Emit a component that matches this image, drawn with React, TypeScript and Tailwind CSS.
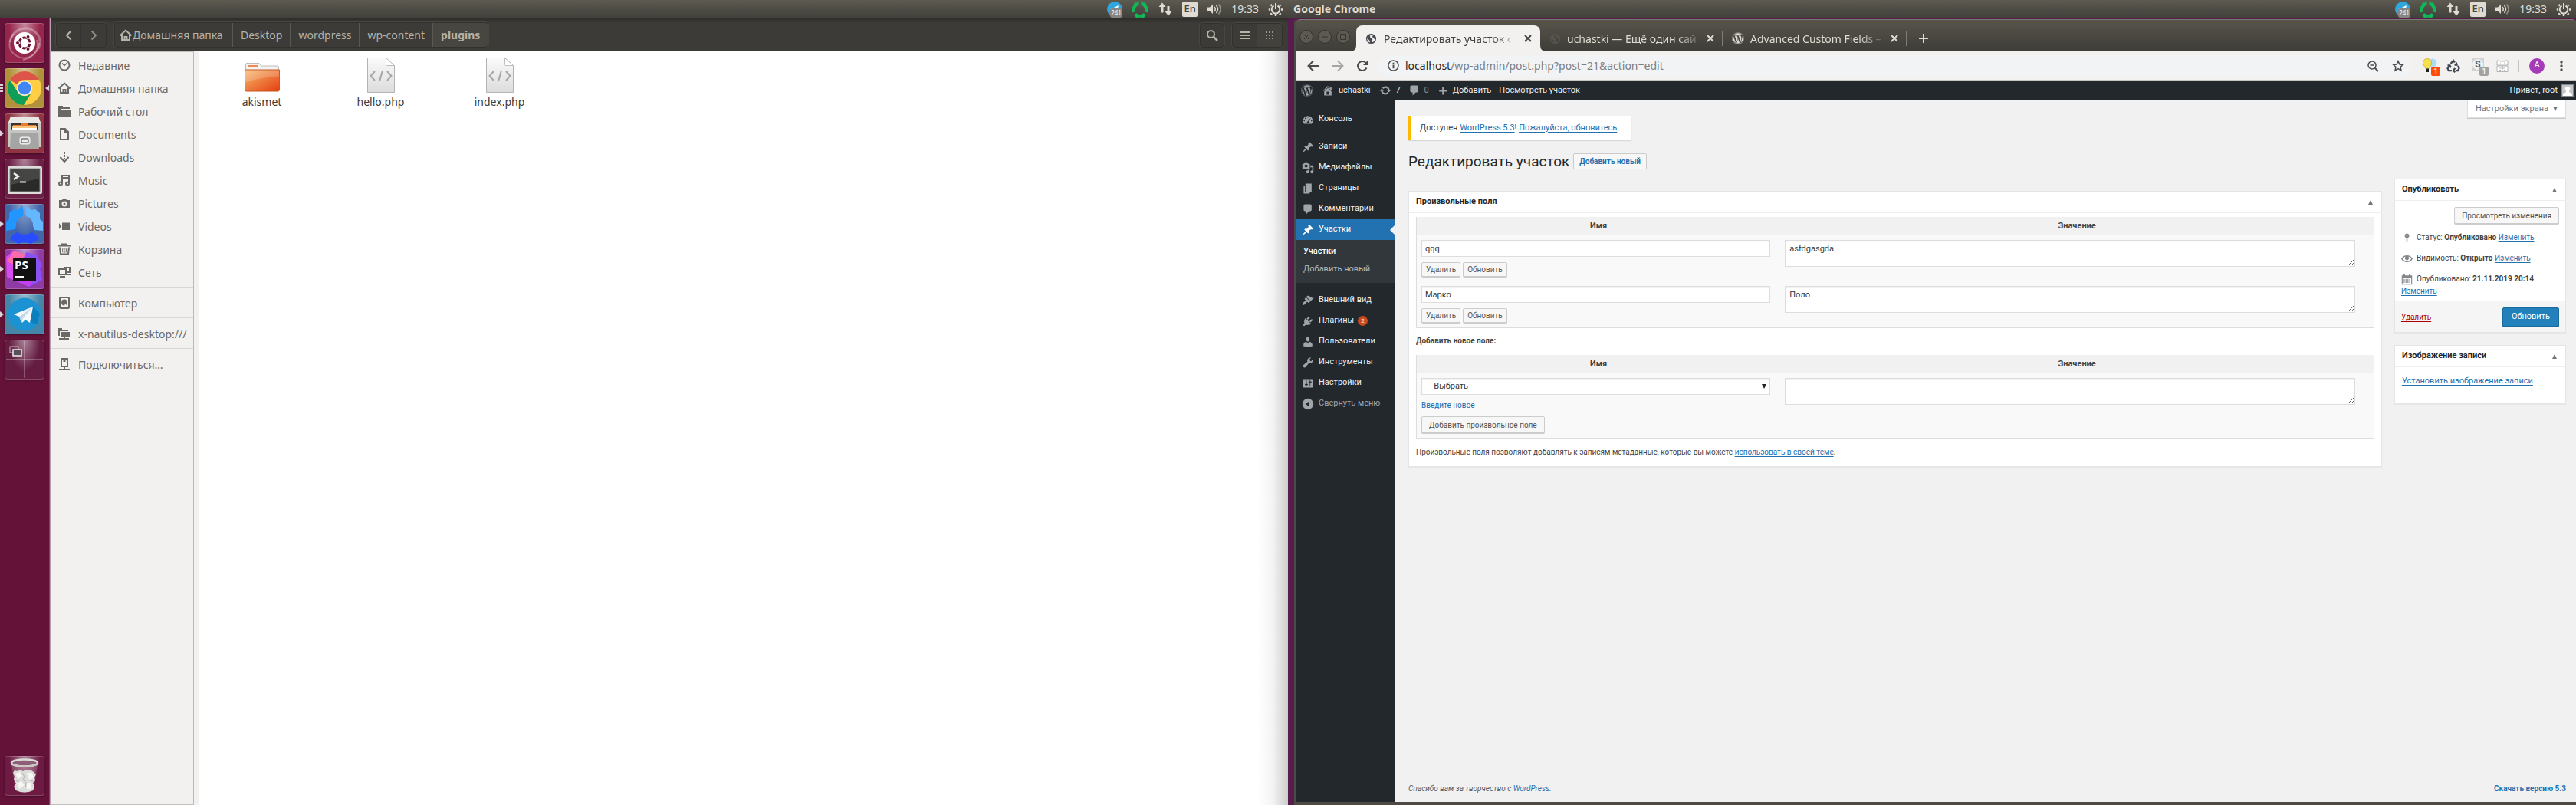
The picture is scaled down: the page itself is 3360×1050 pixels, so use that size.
import React, { ReactNode } from "react";
import { FaWordpress } from "react-icons/fa";

/* ---------- icon paths (20 × 20 grid) ---------- */

const glyphs = {
  dashboard:
    "M3.76 17h12.48c1.1-1.37 1.76-3.11 1.76-5 0-4.42-3.58-8-8-8s-8 3.58-8 8c0 1.89.66 3.63 1.76 5zM10 5a1 1 0 1 1 0 2 1 1 0 0 1 0-2zM6 7a1 1 0 1 1 0 2 1 1 0 0 1 0-2zM14.6 7.2l-3.1 7.1c.1 1.1-.6 1.9-1.6 1.9s-1.7-.8-1.6-1.7c.1-.8.7-1.3 1.4-1.4zM4 11a1 1 0 1 1 0 2 1 1 0 0 1 0-2zM16 11a1 1 0 1 1 0 2 1 1 0 0 1 0-2z",
  post: "M10.44 3.02l1.82-1.82 6.36 6.35-1.83 1.82c-1.05-.68-2.48-.57-3.41.36l-.75.75c-.92.93-1.04 2.35-.35 3.41l-1.83 1.82-2.41-2.41-2.8 2.79c-.42.42-3.38 2.71-3.8 2.29s1.86-3.39 2.28-3.81l2.79-2.79L4.1 9.36l1.83-1.82c1.05.69 2.48.57 3.4-.36l.75-.75c.93-.92 1.05-2.35.36-3.41z",
  media:
    "M13 11V4c0-.55-.45-1-1-1h-1.67L9 1H5L3.67 3H2c-.55 0-1 .45-1 1v7c0 .55.45 1 1 1h10c.55 0 1-.45 1-1zM7 4.5c1.38 0 2.5 1.12 2.5 2.5S8.38 9.5 7 9.5 4.5 8.38 4.5 7 5.62 4.5 7 4.5zM14 6h5v10.5c0 1.38-1.12 2.5-2.5 2.5S14 17.88 14 16.5s1.12-2.5 2.5-2.5c.17 0 .34.02.5.05V9h-3V6zm-4 8.05V13h2v3.5c0 1.38-1.12 2.5-2.5 2.5S7 17.88 7 16.5 8.12 14 9.5 14c.17 0 .34.02.5.05z",
  page: "M6 15V2h10v13H6zm-1 1h8v2H3V5h2v11z",
  comments:
    "M5 2h9q.82 0 1.41.59T16 4v7q0 .82-.59 1.41T14 13h-2l-5 5v-5H5q-.82 0-1.41-.59T3 11V4q0-.82.59-1.41T5 2z",
  appearance:
    "M14.48 11.06L7.41 3.99l1.5-1.5c.5-.56 2.3-.47 3.51.32 1.21.8 1.43 1.28 2.91 2.1 1.18.64 2.45 1.26 4.45.85zm-.71.71L6.7 4.7 4.93 6.47c-.39.39-.39 1.02 0 1.41l1.06 1.06c.39.39.39 1.03 0 1.42-.6.6-1.43 1.11-2.21 1.69-.35.26-.7.53-1.01.84C1.43 14.23.4 16.08 1.4 17.07c.99 1 2.84-.03 4.18-1.36.31-.31.58-.66.85-1.02.57-.78 1.08-1.61 1.69-2.21.39-.39 1.02-.39 1.41 0l1.06 1.06c.39.39 1.02.39 1.41 0z",
  plugins:
    "M13.11 4.36L9.87 7.6 8 5.73l3.24-3.24c.35-.34 1.05-.2 1.56.32.52.51.66 1.21.31 1.55zm-8 1.77l.91-1.12 9.01 9.01-1.19.84c-.71.71-2.63 1.16-3.82 1.16H6.14L4.9 17.26c-.59.59-1.54.59-2.12 0-.59-.58-.59-1.53 0-2.12l1.24-1.24v-3.88c0-1.13.4-3.19 1.09-3.89zm7.26 3.97l3.24-3.24c.34-.35 1.04-.21 1.55.31.52.51.66 1.21.31 1.55l-3.24 3.25z",
  users:
    "M10 9.25c-2.27 0-2.73-3.44-2.73-3.44C7 4.02 7.82 2 9.97 2c2.16 0 2.98 2.02 2.71 3.81 0 0-.41 3.44-2.68 3.44zm0 2.57L12.72 10c2.39 0 4.52 2.33 4.52 4.53v2.49s-3.65 1.13-7.24 1.13c-3.65 0-7.24-1.13-7.24-1.13v-2.49c0-2.25 1.94-4.48 4.47-4.48z",
  tools:
    "M16.68 9.77c-1.34 1.34-3.3 1.67-4.95.99l-5.41 6.52c-.99.99-2.59.99-3.58 0s-.99-2.59 0-3.57l6.52-5.42c-.68-1.65-.35-3.61.99-4.95 1.28-1.28 3.12-1.62 4.72-1.06l-2.89 2.89 2.82 2.82 2.86-2.87c.53 1.58.18 3.39-1.08 4.65z",
  settings:
    "M18 16V4c0-.55-.45-1-1-1H3c-.55 0-1 .45-1 1v12c0 .55.45 1 1 1h14c.55 0 1-.45 1-1zM8 11h1c.55 0 1 .45 1 1s-.45 1-1 1H8v1.5c0 .28-.22.5-.5.5s-.5-.22-.5-.5V13H6c-.55 0-1-.45-1-1s.45-1 1-1h1V5.5c0-.28.22-.5.5-.5s.5.22.5.5V11zm5-2h-1c-.55 0-1-.45-1-1s.45-1 1-1h1V5.5c0-.28.22-.5.5-.5s.5.22.5.5V7h1c.55 0 1 .45 1 1s-.45 1-1 1h-1v5.5c0 .28-.22.5-.5.5s-.5-.22-.5-.5V9z",
  collapse: "M10 1a9 9 0 1 1 0 18 9 9 0 0 1 0-18zM12.5 5L6.5 10l6 5z",
  home: "M16 8.5l1.53 1.53-1.06 1.06L10 4.6l-6.47 6.49-1.06-1.06L10 2.5l4 4v-2h2v4zm-6-2.46l6 5.99V18H4v-5.97zM12 17v-5H8v5h4z",
  update:
    "M10.2 3.28c3.53 0 6.43 2.61 6.92 6h2.08l-3.5 4-3.5-4h2.32c-.45-1.97-2.21-3.45-4.32-3.45-1.45 0-2.73.71-3.54 1.78L4.95 5.66C6.23 4.2 8.11 3.28 10.2 3.28zm-.4 13.44c-3.52 0-6.43-2.61-6.92-6H.8l3.5-4c1.17 1.33 2.33 2.67 3.5 4H5.48c.45 1.97 2.21 3.45 4.32 3.45 1.45 0 2.73-.71 3.54-1.78l1.71 1.95c-1.28 1.46-3.15 2.38-5.25 2.38z",
  plus: "M17 9v3h-5v5H9v-5H4V9h5V4h3v5h5z",
  pin: "M14 6c0 1.86-1.28 3.41-3 3.86V16c0 1-2 2-2 2V9.86C7.28 9.41 6 7.86 6 6c0-2.21 1.79-4 4-4s4 1.79 4 4zM8 5c0 .55.45 1 1 1s1-.45 1-1-.45-1-1-1-1 .45-1 1z",
  eye: "M19.7 9.4C17.7 6 14 3.9 10 3.9S2.3 6 .3 9.4L0 10l.3.6c2 3.4 5.7 5.5 9.7 5.5s7.7-2.1 9.7-5.5l.3-.6-.3-.6zM10 14.1c-3.1 0-6-1.6-7.7-4.1C3.6 8 5.7 6.6 8 6.1c-.9.6-1.5 1.7-1.5 2.9 0 1.9 1.6 3.5 3.5 3.5s3.5-1.6 3.5-3.5c0-1.2-.6-2.3-1.5-2.9 2.3.5 4.4 1.9 5.7 3.9-1.7 2.5-4.6 4.1-7.7 4.1z",
  calendar:
    "M1 3h3V1h2.500v2h7V1H16v2h3v16H1zM2.500 7.500v10h15v-10zM4.500 9h1.500v7H4.500zM7.500 9H9v7H7.500zM11 9h1.500v7H11zM14 9h1.500v7H14z",
};
type Glyph = keyof typeof glyphs;

function Dash({ name, className = "size-4" }: { name: Glyph; className?: string }) {
  return (
    <svg viewBox="0 0 20 20" className={`shrink-0 ${className}`} fill="currentColor" fillRule="evenodd" aria-hidden="true">
      <path d={glyphs[name]} />
    </svg>
  );
}

/* ---------- top panel ---------- */

function Indicators() {
  return (
    <div className="flex items-center gap-3 pr-[6px] text-[14px]">
      <svg viewBox="0 0 20 22" className="h-[22px] w-5">
        <circle cx="10" cy="11" r="10" fill="#2ea6de" />
        <path d="M3.500 11.500 15 6l-1 4-6 .5z" fill="#fff" />
        <rect x="4" y="10" width="16" height="12" rx="3" fill="#868686" />
        <text x="12" y="19" fontSize="8" fill="#fff" textAnchor="middle" fontFamily="Noto Sans">241</text>
      </svg>
      <svg viewBox="0 0 22 24" className="h-[24px] w-[22px]" fill="#0fb757">
        <path d="M9.500 1v5.500A7 7 0 0 0 5 12.500c0 .8.100 1.600.4 2.500L1 16.500A10 10 0 0 1 1 9l2-3 1-3 2.500.5zM12.500 1v5.500a7 7 0 0 1 4.500 6c0 .8-.1 1.600-.4 2.500l4.400 1.500a10 10 0 0 0 0-7.500l-2-3-1-3-2.500.5z" />
        <path d="M6 17a7 7 0 0 0 10 0l2.500 3.500-1 .500-1.500 2.500-3-.5-2-.5-2 .5-3 .5L4.500 21l-1-.5z" />
      </svg>
      <svg viewBox="0 0 20 20" className="size-5" fill="#dfdbd2">
        <path d="M6 1.500 1.500 7H4.500v7.500h3V7h3zM14 18.500 18.500 13h-3V6h-3v7h-3z" />
      </svg>
      <span className="flex h-5 w-5 items-center justify-center rounded-[2px] bg-[#dfdbd2] text-[13px] font-medium text-[#45443f]">En</span>
      <svg viewBox="0 0 20 20" className="size-5" fill="none" stroke="#dfdbd2" strokeWidth="1.5">
        <path d="M1 7.500h3L8 4v12l-4-3.500H1z" fill="#dfdbd2" stroke="none" />
        <path d="M10 7q2.500 3 0 6M12.500 5q4 5 0 10" />
        <path d="M15.500 3.500q5 6.500 0 13" opacity=".5" />
      </svg>
      <span className="leading-6">19:33</span>
      <svg viewBox="0 0 20 20" className="size-5" fill="none" stroke="#dfdbd2" strokeWidth="2">
        <path d="M7.500 5.500a5.300 5.300 0 1 0 5 0M10 2v8" />
        <path d="M10 16v3M3 10.500H.8M19.200 10.500H17M5 5.500 3.500 4M15 5.500 16.500 4M5 15.500 3.500 17M15 15.500l1.500 1.500" strokeWidth="2.500" />
      </svg>
    </div>
  );
}

function TopPanel() {
  return (
    <header className="grid h-6 grid-cols-2 bg-linear-to-b from-[#5d5a50] to-[#403f3a] text-[#dfdbd2]">
      <div className="flex items-center justify-end">
        <Indicators />
      </div>
      <div className="flex items-center justify-between">
        <span className="pl-[7px] text-[14px] leading-6 font-bold">Google Chrome</span>
        <Indicators />
      </div>
    </header>
  );
}

/* ---------- launcher ---------- */

const launcher: { name: string; tile: string; marks?: "one" | "three"; focused?: boolean; art: ReactNode }[] = [
  {
    name: "Ubuntu",
    tile: "bg-[#96264c]",
    art: (
      <>
        <g fill="none" stroke="#fff" strokeOpacity=".3">
          <path d="M7 25C9 10 25 3 36 9s12 15 8 25" strokeWidth="3" />
          <path d="M45 26C44 42 28 50 16 43S4 25 12 14" strokeWidth="2" />
          <path d="M24 48C36 46 46 36 42 22" strokeWidth="2" />
        </g>
        <circle cx="26" cy="26" r="14" fill="#fff" />
        <circle cx="26" cy="26" r="7" fill="none" stroke="#6d1236" strokeWidth="3" strokeDasharray="12.660 2" strokeDashoffset="-1" />
        <circle cx="17" cy="26" r="2.500" fill="#6d1236" stroke="#fff" />
        <circle cx="30.500" cy="18" r="2.500" fill="#6d1236" stroke="#fff" />
        <circle cx="30.500" cy="34" r="2.500" fill="#6d1236" stroke="#fff" />
      </>
    ),
  },
  {
    name: "Google Chrome",
    tile: "bg-[#b1923a]",
    marks: "three",
    focused: true,
    art: (
      <>
        <circle cx="26" cy="26" r="22" fill="#ffce44" />
        <path d="M7 15A22 22 0 0 1 45 15H26a11 11 0 0 0-10 6z" fill="#dc5548" />
        <path d="M7 15a22 22 0 0 0 18 33l10-16a11 11 0 0 1-18-1z" fill="#0f9d58" />
        <circle cx="26" cy="26" r="10" fill="#f4f4f4" />
        <circle cx="26" cy="26" r="8.500" fill="#4285f4" />
      </>
    ),
  },
  {
    name: "Файлы",
    tile: "bg-[#8f3440]",
    marks: "one",
    art: (
      <>
        <path d="M8 4h36l3 8v32H5V12z" fill="#c9c9c7" />
        <path d="M8 4h36l3 8H5z" fill="#e8e8e6" />
        <rect x="9" y="13" width="34" height="12" fill="#393633" />
        <path d="M11 15h10l1-2h8l1 2h10v9H11z" fill="#e97a2f" />
        <path d="M10 17h32v3H10z" fill="#f7c27c" />
        <path d="M10 19h32v2H10z" fill="#fff" />
        <path d="M8 22h36l1 25H7z" fill="#a5a5a3" />
        <path d="M8 22h36v3H8z" fill="#c4c4c2" />
        <rect x="20" y="31" width="13" height="9" rx="2" fill="#ddd" stroke="#f4f4f4" />
        <rect x="22" y="33" width="9" height="5" rx="1" fill="#eee" stroke="#454545" />
      </>
    ),
  },
  {
    name: "Терминал",
    tile: "bg-[#6d2045]",
    art: (
      <>
        <rect x="4" y="10" width="45" height="36" rx="2" fill="#dcdcda" />
        <rect x="7" y="13" width="39" height="30" fill="#2a2a29" stroke="#8d8d8b" />
        <path d="M8 14h37v12L8 34z" fill="#fff" fillOpacity=".13" />
        <path d="m12 19 6 4-6 4" fill="none" stroke="#eee" strokeWidth="2.500" />
        <path d="M20 30.500h8" stroke="#eee" strokeWidth="2" />
      </>
    ),
  },
  {
    name: "Hubstaff",
    tile: "bg-[#4366a8]",
    marks: "one",
    art: (
      <>
        <path d="M23 2c2 5 2 10 1 14a12 12 0 0 0-9 13l-1 4-12 2V23l4-3 0-8 6-5 5 1z" fill="#2196ff" />
        <path d="M29 2c-2 5-2 10-1 14a12 12 0 0 1 9 13l2 5 11 1V23l-4-3 0-8-6-5-5 1z" fill="#63b8ff" />
        <path d="M7 46l4-6 5-3q10 6 20 0l5 3 4 6-5 3-6 3q-8-4-16 0l-6-3z" fill="#2a4cff" />
      </>
    ),
  },
  {
    name: "PhpStorm",
    tile: "bg-[#8f3aa5]",
    marks: "one",
    art: (
      <>
        <path d="M2 10 12 2l15 6 3 30-15 4-12-6z" fill="#d84bf0" />
        <path d="M12 2l15 5-10 15L3 16z" fill="#fb6aa9" />
        <path d="M28 4l13 3 8 14-3 4 3 15-17 9-17-8z" fill="#8a51f5" />
        <path d="M20 40l22-6-10 15-17-7z" fill="#c53ff0" />
        <rect x="11" y="11" width="30" height="30" fill="#111" />
        <text x="13" y="26" fontSize="15" fontWeight="bold" fill="#fff" fontFamily="Open Sans">PS</text>
        <path d="M14 36h11" stroke="#fff" strokeWidth="2" />
      </>
    ),
  },
  {
    name: "Telegram",
    tile: "bg-[#4586a8]",
    marks: "one",
    art: (
      <>
        <circle cx="26" cy="26" r="21.500" fill="#1b92d1" />
        <path d="M37 16l9 9-4 14-9-3z" fill="#0d7fbd" />
        <path d="M37 16 12 26l7 3 4 8 4-4 6 4z" fill="#f4f8fb" />
        <path d="M37 16 19 29l3 8 2-6z" fill="#c3d9ea" />
      </>
    ),
  },
  {
    name: "Рабочие места",
    tile: "bg-[#641c41]",
    art: (
      <>
        <path d="M2 26h48M26 2v48" stroke="#fff" strokeOpacity=".5" />
        <rect x="7" y="9" width="11" height="8" fill="none" stroke="#c5b4be" strokeWidth="1" />
        <rect x="11" y="13" width="11" height="8" fill="#5a5057" stroke="#eee" strokeWidth="1.500" />
      </>
    ),
  },
];

function Tile({ name, tile, children }: { name: string; tile: string; children: ReactNode }) {
  return (
    <button
      aria-label={name}
      className={`size-[52px] rounded-[4px] shadow-[inset_0_0_0_1px_rgba(255,255,255,0.2),0_1px_3px_rgba(0,0,0,0.4)] ${tile}`}
    >
      <svg viewBox="0 0 52 52" className="size-[52px] rounded-[4px] bg-[radial-gradient(ellipse_at_50%_0%,rgba(255,255,255,0.45),transparent_55%)]">
        {children}
      </svg>
    </button>
  );
}

function Launcher() {
  return (
    <nav aria-label="Панель запуска" className="flex w-[65px] shrink-0 flex-col justify-between border-r border-[#8b3a78] bg-[#651239] pt-[6px] pb-[6px]">
      <ul className="flex flex-col gap-[7px]">
        {launcher.map((item) => (
          <li key={item.name} className="flex items-center">
            <span className="flex w-[6px] flex-col gap-[2px] text-[#d8d4d6]">
              {item.marks === "three" && [0, 1, 2].map((n) => <span key={n} className="h-[2px] w-[4px] bg-current" />)}
              {item.marks === "one" && (
                <svg viewBox="0 0 5 8" className="h-2 w-[5px]" fill="currentColor"><path d="M0 0l5 4-5 4z" /></svg>
              )}
            </span>
            <Tile name={item.name} tile={item.tile}>{item.art}</Tile>
            {item.focused && (
              <svg viewBox="0 0 5 8" className="ml-px h-2 w-[5px]" fill="#d8d4d6"><path d="M5 0 0 4l5 4z" /></svg>
            )}
          </li>
        ))}
      </ul>
      <div className="pl-[6px]">
        <Tile name="Корзина" tile="bg-[#6d1b43]">
          <path d="M9 10h34l-5 35q-12 6-24 0z" fill="#fff" fillOpacity=".15" />
          <path d="m11 22 2-3 4 1 3-2 4 2 4-2 3 1 4 0 3 2 3 3-2 4 1 4-3 3 2 5-2 5q-11 5-22 0l-3-5 3-4-3-5 1-4z" fill="#dddedb" />
          <path d="m14 23 6-2 3 5-5 4zM29 22l7 0 2 7-6 2zM16 35l6-2 4 5-7 5zM29 35l6 0-1 8-5 0z" fill="#f6f6f4" />
          <path d="M23 22l3 5-2 4 4 4-1 6M15 32l4 2M33 32l4 1" fill="none" stroke="#b3b3ae" />
          <ellipse cx="26" cy="9" rx="17" ry="4.500" fill="#8d6077" stroke="#dcdcd8" strokeWidth="2.500" />
          <path d="M9 9q17 8 34 0v3q-17 5-34 0z" fill="#c9c9c4" />
        </Tile>
      </div>
    </nav>
  );
}

/* ---------- file manager ---------- */

const places: { label: string; icon: ReactNode; gap?: boolean }[] = [
  { label: "Недавние", icon: <><circle cx="8" cy="8" r="6.500" /><path d="M5 5.500 8 8.500l3-3" strokeWidth="1.500" /></> },
  { label: "Домашняя папка", icon: <><path d="M0.500 8.500 8 1.500l7.500 7M3 7.500V14h10V7.500M6.500 14v-4h3v4" /></> },
  { label: "Рабочий стол", icon: <><path d="M0 1h6v2h9v2H3v10H0z" fill="currentColor" stroke="none" /><path d="M4 6h12v9H4z" fill="currentColor" stroke="none" /></> },
  { label: "Documents", icon: <path d="M3 1h6l4 4v10H3zM9 1v4h4" /> },
  { label: "Downloads", icon: <><path d="M8 1v9" strokeDasharray="3 1" /><path d="m2.500 8 5.500 6 5.500-6" /></> },
  { label: "Music", icon: <><path d="M5 12V2h9v10M5 5h9" /><circle cx="3" cy="12.500" r="2" /><circle cx="12" cy="12.500" r="2" /></> },
  { label: "Pictures", icon: <path d="M1 4h4l1-2h4l1 2h4v10H1zM8 5.500a3.500 3.500 0 1 0 0 7 3.500 3.500 0 0 0 0-7zm0 2a1.500 1.500 0 1 1 0 3 1.500 1.500 0 0 1 0-3z" fill="currentColor" fillRule="evenodd" stroke="none" /> },
  { label: "Videos", icon: <path d="M5 3.500h10v9.500H5zM1 4l3 4-3 4z" fill="currentColor" stroke="none" /> },
  { label: "Корзина", icon: <><path d="M0 3.500h16M4 1.500h8" /><path d="M2 5.500l1 9h10l1-9" /><path d="M6 6.500q-1 4 0 6M10 6.500q1 4 0 6M8 6v7" strokeWidth="1" /></> },
  { label: "Сеть", icon: <><path d="M1 4h9v7H1zM3 14h6M7 2h8v6h-3" /><path d="M2 13h7v2H2zM11 10h5v2h-5z" fill="currentColor" stroke="none" /></> },
  { label: "Компьютер", gap: true, icon: <><rect x="2" y="1" width="12" height="14" rx="1" /><path d="M8 3.500a4 4 0 1 0 .1 8l1-2.500 2.500 3 .4-4a4 4 0 0 0-4-4.500z" fill="currentColor" stroke="none" /></> },
  { label: "x-nautilus-desktop:///", gap: true, icon: <><path d="M0 1h5v2h8v2H2v6H0zM3 6h12v6H3z" fill="currentColor" stroke="none" /><path d="M1 15h13M8 12v3" /></> },
  { label: "Подключиться…", gap: true, icon: <><rect x="4" y="1" width="8" height="10" /><path d="M6.500 4h3M8 11v3M1 15h14" /></> },
];

function CodeFile() {
  return (
    <svg viewBox="0 0 36 46" className="h-[46px] w-9" aria-hidden="true">
      <defs>
        <linearGradient id="paper" x1="0" y1="0" x2="0" y2="1"><stop offset="0" stopColor="#fafafa" /><stop offset="1" stopColor="#dcdcdc" /></linearGradient>
      </defs>
      <path d="M.5.500h24l11 10v35H.5z" fill="url(#paper)" stroke="#b4b4b4" />
      <path d="M24.500.500v9q0 1 1 1h10z" fill="#fff" stroke="#bdbdbd" />
      <path d="m10 18-5.500 6 5.500 6M26 18l5.500 6-5.500 6M20 17l-4 14" fill="none" stroke="#a6a6a6" strokeWidth="2" />
    </svg>
  );
}

function FolderPic() {
  return (
    <svg viewBox="0 0 46 40" className="h-10 w-[46px]" aria-hidden="true">
      <defs>
        <linearGradient id="folder" x1="0" y1="0" x2="1" y2="1"><stop offset="0" stopColor="#f6bd75" /><stop offset=".45" stopColor="#ee8242" /><stop offset="1" stopColor="#e53e10" /></linearGradient>
      </defs>
      <path d="M1.500 12V3q0-1.500 1.500-1.500h16l3 3.500h21q1.500 0 1.500 1.500V12z" fill="#f3f3f3" stroke="#bcbcbc" />
      <path d="M4 4h13v2H4z" fill="#f0894e" />
      <path d="M.5 10h45v26q0 2-2 2h-41q-2 0-2-2z" fill="url(#folder)" stroke="#c9571f" />
      <path d="M1 10.500h44v8Q20 20 1 26z" fill="#fff" fillOpacity=".18" />
    </svg>
  );
}

function FileManager() {
  const crumbs = ["Desktop", "wordpress", "wp-content"];
  const box = "flex items-center rounded-[4px] border border-[#32312d] shadow-[0_0_0_1px_#474640]";
  return (
    <section aria-label="Файловый менеджер" className="flex min-w-0 flex-1 flex-col border-l border-[#b5a2ae]">
      <div className="flex h-[43px] items-center gap-[10px] bg-linear-to-b from-[#2f2e2b] via-[#3c3b37] via-15% to-[#3c3b37] px-[7px] text-[14px] text-[#b5b2a7]">
        <div className={`${box} h-8`}>
          <button aria-label="Назад" className="flex h-full w-8 items-center justify-center border-r border-[#34332f]">
            <svg viewBox="0 0 12 14" className="h-[14px] w-3" fill="none" stroke="currentColor" strokeWidth="2"><path d="M8.500 1.500 3 7l5.500 5.500" /></svg>
          </button>
          <button aria-label="Вперёд" className="flex h-full w-8 items-center justify-center text-[#8f8c83]">
            <svg viewBox="0 0 12 14" className="h-[14px] w-3" fill="none" stroke="currentColor" strokeWidth="2"><path d="M3.500 1.500 9 7l-5.500 5.500" /></svg>
          </button>
        </div>
        <div className={`${box} h-[33px] whitespace-nowrap`}>
          <button className="flex h-full w-[154px] items-center gap-px border-r border-[#5a5952] pl-[6px]">
            <svg viewBox="0 0 16 16" className="size-4 shrink-0" fill="none" stroke="currentColor" strokeWidth="2"><path d="M.5 8.500 8 1.500l7.500 7M3 7.500V14h10V7.500M6.500 14v-4h3v4" /></svg>
            Домашняя папка
          </button>
          {crumbs.map((c) => (
            <button key={c} className="h-full border-r border-[#5a5952] px-[10px]">{c}</button>
          ))}
          <button className="h-full rounded-r-[3px] bg-[#474640] px-[10px] font-bold">plugins</button>
        </div>
        <div className="flex-1" />
        <button aria-label="Поиск" className={`${box} h-8 w-8 justify-center`}>
          <svg viewBox="0 0 16 16" className="size-4" fill="none" stroke="currentColor" strokeWidth="2"><circle cx="6.500" cy="6.500" r="4.500" /><path d="m10 10 5 5" strokeWidth="2.500" /></svg>
        </button>
        <div className={`${box} h-8`}>
          <button aria-label="Список" className="flex h-full w-8 items-center justify-center">
            <svg viewBox="0 0 12 12" className="size-3" fill="currentColor"><path d="M0 1h4v2H0zM5 1h7v2H5zM0 5h4v2H0zM5 5h7v2H5zM0 9h4v2H0zM5 9h7v2H5z" /></svg>
          </button>
          <button aria-label="Значки" className="flex h-full w-8 items-center justify-center rounded-r-[3px] bg-[#42413c] text-[#9c998f]">
            <svg viewBox="0 0 12 12" className="size-3" fill="currentColor"><path d="M1 1h2v2H1zM5 1h2v2H5zM9 1h2v2H9zM1 5h2v2H1zM5 5h2v2H5zM9 5h2v2H9zM1 9h2v2H1zM5 9h2v2H5zM9 9h2v2H9z" /></svg>
          </button>
        </div>
      </div>
      <div className="flex flex-1">
        <ul className="w-[187px] shrink-0 overflow-hidden border-t border-r border-b border-[#c3c1be] border-r-[#bab8b6] bg-[#f2f1f0] pt-[2px] text-[14px] text-[#6b6965]">
          {places.map((p) => (
            <li key={p.label} className={p.gap ? "pt-[10px]" : ""}>
              {p.gap && <div className="-mt-[6px] mb-[5px] h-px bg-[#d9d7d5]" />}
              <a href="#" className="flex h-[30px] items-center gap-[10px] pl-[10px] whitespace-nowrap">
                <svg viewBox="0 0 16 16" className="size-4 shrink-0" fill="none" stroke="currentColor" strokeWidth="2" aria-hidden="true">{p.icon}</svg>
                {p.label}
              </a>
            </li>
          ))}
        </ul>
        <div className="w-[6px] shrink-0 bg-[#f2f1f0]" />
        <div className="flex flex-1 bg-[linear-gradient(to_left,#cccccc,#f4f4f4_20px,#ffffff_40px)] pt-2 pl-[5px] text-[14px] text-[#3c3c3c]">
          {["akismet", "hello.php", "index.php"].map((f) => (
            <figure key={f} className="flex h-[72px] w-[155px] flex-col items-center">
              <span className="flex h-[46px] items-end">{f === "akismet" ? <FolderPic /> : <CodeFile />}</span>
              <figcaption className="leading-6">{f}</figcaption>
            </figure>
          ))}
        </div>
      </div>
    </section>
  );
}

/* ---------- browser ---------- */

function CloseX() {
  return (
    <svg viewBox="0 0 10 10" className="size-[10px]" fill="none" stroke="currentColor" strokeWidth="2"><path d="m1 1 8 8M9 1 1 9" /></svg>
  );
}

function Globe({ className }: { className: string }) {
  return (
    <svg viewBox="0 0 16 16" className={`size-[15px] shrink-0 ${className}`} fill="currentColor" fillRule="evenodd">
      <path d="M8 1a7 7 0 1 1 0 14A7 7 0 0 1 8 1zM8.500 2.500 6 4l1 1.500L5.500 7H9l1 2-1.500 1.500V13c2.500 0 4.500-2 5-4.500L11 7.500V6L9 5.500l1.500-2zM2.300 7.500C2.200 10 4 12.700 6.500 13.300L6 11 4.500 9z" />
    </svg>
  );
}

function BrowserTabs() {
  const dot = "flex size-[18px] items-center justify-center rounded-full border border-[#34332f] bg-[#5d5a51] text-[#35342f]";
  const title = "w-[178px] mask-r-from-80% whitespace-nowrap";
  return (
    <div className="flex h-[42px] items-end rounded-t-[5px] border-t border-[#7d7a71] bg-linear-to-b from-[#57544b] to-[#3e3d38] text-[14px] text-[#dfdbd2]">
      <div className="flex h-full items-center gap-[6px] pt-[2px] pl-[4px]">
        <button aria-label="Закрыть окно" className={dot}><svg viewBox="0 0 8 8" className="size-2" stroke="currentColor"><path d="m1 1 6 6M7 1 1 7" /></svg></button>
        <button aria-label="Свернуть окно" className={dot}><svg viewBox="0 0 8 8" className="size-2" stroke="currentColor"><path d="M0 4h8" /></svg></button>
        <button aria-label="Развернуть окно" className={dot}><svg viewBox="0 0 8 8" className="size-2" stroke="currentColor" fill="none"><path d="M.5.500h7v7h-7z" /></svg></button>
      </div>
      <svg viewBox="0 0 8 8" className="size-2" fill="#f2f1f0"><path d="M8 0v8H0q8 0 8-8z" /></svg>
      <div className="flex h-[34px] w-[240px] items-center rounded-t-[8px] bg-[#f2f1f0] pr-[11px] pl-3 text-[#45443f]">
        <Globe className="text-[#45484c]" />
        <span className={`ml-[9px] ${title}`}>Редактировать участок ‹</span>
        <button aria-label="Закрыть вкладку" className="ml-auto"><CloseX /></button>
      </div>
      <svg viewBox="0 0 8 8" className="size-2" fill="#f2f1f0"><path d="M0 0v8h8q-8 0-8-8z" /></svg>
      <div className="flex h-[34px] w-[230px] items-center pl-1">
        <Globe className="text-[#55544e]" />
        <span className={`ml-2 ${title}`}>uchastki — Ещё один сай</span>
        <button aria-label="Закрыть вкладку" className="mr-[10px] ml-auto"><CloseX /></button>
        <span className="h-5 w-px bg-[#7f7c73]" />
      </div>
      <div className="flex h-[34px] w-[240px] items-center pl-3">
        <FaWordpress className="size-4 shrink-0" />
        <span className={`ml-2 ${title}`}>Advanced Custom Fields –</span>
        <button aria-label="Закрыть вкладку" className="mr-[10px] ml-auto"><CloseX /></button>
        <span className="h-5 w-px bg-[#7f7c73]" />
      </div>
      <button aria-label="Новая вкладка" className="flex h-[34px] w-11 items-center justify-center">
        <svg viewBox="0 0 12 12" className="size-3" stroke="currentColor" strokeWidth="2"><path d="M6 0v12M0 6h12" /></svg>
      </button>
    </div>
  );
}

function AddressBar() {
  return (
    <div className="flex h-[38px] items-center border-b border-[#c9c7c4] bg-[#f2f1f0] text-[#4a4b4d]">
      <div className="flex w-[107px] items-center gap-4 pl-[14px]">
        <button aria-label="Назад"><svg viewBox="0 0 16 16" className="size-4" fill="none" stroke="currentColor" strokeWidth="2"><path d="M15 8H2M8 1.500 1.500 8 8 14.500" /></svg></button>
        <button aria-label="Вперёд" className="text-[#a5a5a4]"><svg viewBox="0 0 16 16" className="size-4" fill="none" stroke="currentColor" strokeWidth="2"><path d="M1 8h13M8 1.500 14.500 8 8 14.500" /></svg></button>
        <button aria-label="Обновить"><svg viewBox="0 0 16 16" className="size-4" fill="none" stroke="currentColor" strokeWidth="2"><path d="M13.500 10.500A6 6 0 1 1 12.500 4L14 6" /><path d="M15 1v6H9z" fill="currentColor" stroke="none" /></svg></button>
      </div>
      <div className="flex h-7 flex-1 items-center rounded-full bg-[#f1f3f4] pr-[10px] pl-3">
        <svg viewBox="0 0 16 16" className="size-[15px] shrink-0" fill="none" stroke="currentColor" strokeWidth="1.500"><circle cx="8" cy="8" r="7" /><path d="M8 7v5M8 4v1.500" strokeWidth="2" /></svg>
        <div className="ml-2 flex-1 text-[14px] whitespace-nowrap text-[#7d8085]">
          <span className="text-[#26282b]">localhost</span>/wp-admin/post.php?post=21&amp;action=edit
        </div>
        <div className="flex items-center gap-[17px]">
          <button aria-label="Масштаб"><svg viewBox="0 0 16 16" className="size-4" fill="none" stroke="currentColor" strokeWidth="1.500"><circle cx="7" cy="7" r="5" /><path d="m10.500 10.500 4.500 4.500" strokeWidth="2" /><path d="M4.500 7h5" /></svg></button>
          <button aria-label="В закладки"><svg viewBox="0 0 16 16" className="size-4" fill="none" stroke="currentColor" strokeWidth="1.500"><path d="M8 1.800 9.900 6l4.400.4L11 9.400l1 4.500-4-2.400-4 2.400 1-4.500L1.700 6.400 6.100 6z" /></svg></button>
        </div>
      </div>
      <div className="flex w-[214px] items-center pl-[14px]">
        <svg viewBox="0 0 24 24" className="mt-1 size-6">
          <circle cx="13" cy="6" r="5.500" fill="#a9dcf5" />
          <path d="M6 .5a5.500 5.500 0 0 1 4 9.500l-2 3.500H4L2 10A5.500 5.500 0 0 1 6 .5z" fill="#f7e04e" stroke="#c7a91d" strokeWidth=".7" />
          <path d="M4 13.500h4V18H4z" fill="#222" />
          <rect x="11" y="11" width="12" height="12" rx="2" fill="#ff4a0a" />
          <text x="17" y="21" fontSize="11" fill="#fff" textAnchor="middle" fontFamily="Roboto">1</text>
        </svg>
        <svg viewBox="0 0 24 24" className="ml-[7px] size-[18px]" fill="none" stroke="#3f4650" strokeWidth="3.500">
          <path d="M7.500 8 12 2.500 14.500 6M17 6l1 4-4 0M20 12l2 4-2 4h-4M15 16l-3 4 3 3M9 20H4l-2-4 3-4M2 11l4 0 2 4" strokeWidth="3" />
        </svg>
        <svg viewBox="0 0 24 24" className="mt-1 ml-[13px] size-6">
          <rect x="2" y="0" width="16" height="16" fill="#d2d2d2" />
          <circle cx="10" cy="8" r="7" fill="#f1f1f1" />
          <text x="10" y="12" fontSize="12" fontWeight="bold" fill="#5c5c5c" textAnchor="middle" fontFamily="Roboto">S</text>
          <rect x="12" y="11" width="12" height="12" rx="2" fill="#a2a2a2" />
          <text x="18" y="21" fontSize="11" fill="#fff" textAnchor="middle" fontFamily="Roboto">1</text>
        </svg>
        <svg viewBox="0 0 16 16" className="ml-[10px] size-4" fill="#fff" stroke="#a5a5a5" strokeWidth=".8">
          <path d="M1 1h3l1 1h6l1-1h3v6H1zM1 8h14v7.500H1zM8 8v7M4 11h8M5 4h1M10 4h1M4 13.500h2M10 13.500h2" />
        </svg>
        <span className="ml-[13px] h-4 w-px bg-[#c4c4c4]" />
        <span className="ml-[13px] flex size-5 items-center justify-center rounded-full bg-[#a53bb6] font-[Roboto] text-[11px] text-white">A</span>
        <button aria-label="Меню" className="ml-5"><svg viewBox="0 0 4 14" className="h-[14px] w-1" fill="currentColor"><circle cx="2" cy="2" r="1.700" /><circle cx="2" cy="7" r="1.700" /><circle cx="2" cy="12" r="1.700" /></svg></button>
      </div>
    </div>
  );
}

/* ---------- WordPress admin ---------- */

function AdminBar() {
  return (
    <div className="flex h-[26px] items-center bg-[#23282d] pr-[3px] pl-[6px] text-[11px] whitespace-nowrap text-[#eeeeee]">
      <FaWordpress className="size-4 text-[#a0a5aa]" />
      <a href="#" className="ml-[11px] flex items-center gap-[6px]"><Dash name="home" className="size-4 text-[#a0a5aa]" />uchastki</a>
      <a href="#" className="ml-[12px] flex items-center gap-[5px]"><Dash name="update" className="size-4 text-[#a0a5aa]" />7</a>
      <a href="#" className="ml-[10px] flex items-center gap-[5px] text-[#8a8f94]"><Dash name="comments" className="size-4 text-[#a0a5aa]" />0</a>
      <a href="#" className="ml-[10px] flex items-center gap-[5px]"><Dash name="plus" className="size-4 text-[#a0a5aa]" />Добавить</a>
      <a href="#" className="ml-[10px]">Посмотреть участок</a>
      <a href="#" className="ml-auto flex items-center gap-[5px]">
        Привет, root
        <svg viewBox="0 0 16 16" className="size-4"><rect x=".5" y=".5" width="15" height="15" fill="#c6c6c6" stroke="#82878c" /><path d="M8 3a3 3 0 0 1 2 5.500l0 1.500 4 3v2H2v-2l4-3V8.500A3 3 0 0 1 8 3z" fill="#fff" /></svg>
      </a>
    </div>
  );
}

const menu: { label: string; icon: Glyph }[][] = [
  [{ label: "Консоль", icon: "dashboard" }],
  [
    { label: "Записи", icon: "post" },
    { label: "Медиафайлы", icon: "media" },
    { label: "Страницы", icon: "page" },
    { label: "Комментарии", icon: "comments" },
    { label: "Участки", icon: "post" },
  ],
  [
    { label: "Внешний вид", icon: "appearance" },
    { label: "Плагины", icon: "plugins" },
    { label: "Пользователи", icon: "users" },
    { label: "Инструменты", icon: "tools" },
    { label: "Настройки", icon: "settings" },
    { label: "Свернуть меню", icon: "collapse" },
  ],
];

function AdminMenu() {
  return (
    <nav aria-label="Меню" className="flex w-32 shrink-0 flex-col gap-[9px] bg-[#23282d] pt-[11px] text-[11px] whitespace-nowrap text-[#eeeeee]">
      {menu.map((group) => (
        <ul key={group[0].label}>
          {group.map((m) => {
            const active = m.label === "Участки";
            const muted = m.icon === "collapse";
            return (
              <li key={m.label}>
                <a
                  href="#"
                  className={`flex h-[27px] items-center pl-[7px] ${active ? "bg-[#2271b1] text-white" : ""} ${muted ? "text-[#a0a5aa]" : ""}`}
                >
                  <Dash name={m.icon} className={`size-4 ${active ? "text-white" : "text-[#a0a5aa]"}`} />
                  <span className="ml-[6px]">{m.label}</span>
                  {m.label === "Плагины" && (
                    <span className="ml-[5px] flex size-[13px] items-center justify-center rounded-full bg-[#ca4a1f] text-[8px] text-white">2</span>
                  )}
                  {active && <svg viewBox="0 0 6 12" className="ml-auto h-3 w-[6px]" fill="#f1f1f1"><path d="M6 0v12L0 6z" /></svg>}
                </a>
                {active && (
                  <ul className="bg-[#32373c] pt-1 pb-[6px]">
                    <li><a href="#" className="flex h-[23px] items-center pl-[9px] font-medium text-white">Участки</a></li>
                    <li><a href="#" className="flex h-[23px] items-center pl-[9px] text-[#b4b9be]">Добавить новый</a></li>
                  </ul>
                )}
              </li>
            );
          })}
        </ul>
      ))}
    </nav>
  );
}

const link = "text-[#2271b1] underline underline-offset-2";
const smallButton = "rounded-[2px] border border-[#cccccc] bg-[#f7f7f7] text-[#555555] shadow-[0_1px_0_#cccccc]";

function Up() {
  return <svg viewBox="0 0 6 6" className="size-[6px]" fill="#72777c"><path d="M3 0l3 6H0z" /></svg>;
}

function Box({ title, children }: { title: string; children: ReactNode }) {
  return (
    <section className="border border-[#e5e5e5] bg-white shadow-[0_1px_1px_rgba(0,0,0,0.04)]">
      <div className="flex h-7 items-center justify-between border-b border-[#eeeeee] pr-[11px] pl-[9px]">
        <h2 className="text-[11px] font-bold text-[#23282d]">{title}</h2>
        <button aria-label={`Переключить панель: ${title}`}><Up /></button>
      </div>
      {children}
    </section>
  );
}

const field = "block border border-[#dddddd] bg-white text-[11px] text-[#32373c] shadow-[inset_0_1px_2px_rgba(0,0,0,0.07)]";

function FieldsTable({ children }: { children: ReactNode }) {
  return (
    <table className="w-full table-fixed border-separate border-spacing-0 border border-t-0 border-[#dddddd] bg-[#f9f9f9]">
      <thead className="bg-[#f1f1f1]">
        <tr className="h-6 text-[11px]">
          <th className="w-[38%] font-bold">Имя</th>
          <th className="font-bold">Значение</th>
        </tr>
      </thead>
      <tbody>{children}</tbody>
    </table>
  );
}

function FieldRow({ name, value }: { name: string; value: string }) {
  return (
    <tr className="h-[60px] align-top">
      <td className="pt-[6px] pr-[13px] pl-[6px]">
        <input aria-label="Имя" defaultValue={name} className={`${field} h-[22px] w-full px-1`} />
        <div className="mt-[7px] flex gap-[3px] text-[10px]">
          <button className={`${smallButton} h-[19px] px-[5px]`}>Удалить</button>
          <button className={`${smallButton} h-[19px] px-[5px]`}>Обновить</button>
        </div>
      </td>
      <td className="pt-[6px] pr-6 pl-[6px]">
        <textarea aria-label="Значение" defaultValue={value} className={`${field} h-[35px] w-full resize-y px-[5px] py-[3px] leading-4`} />
      </td>
    </tr>
  );
}

function EditPage() {
  return (
    <div className="flex min-w-0 flex-1 flex-col bg-[#f1f1f1] pr-[13px] pl-[18px] text-[10px] text-[#444444]">
      <div className="flex items-start justify-between text-[11px]">
        <p className="mt-5 flex h-8 items-center border-l-[3px] border-[#ffb900] bg-white pr-4 pl-3 whitespace-pre shadow-[0_1px_1px_rgba(0,0,0,0.1)]">
          Доступен <a href="#" className={link}>WordPress 5.3</a>! <a href="#" className={link}>Пожалуйста, обновитесь</a>.
        </p>
        <button className="flex h-[23px] items-center gap-[6px] border border-t-0 border-[#dddddd] bg-white px-[10px] text-[#72777c] shadow-[0_1px_0_#cccccc]">
          Настройки экрана
          <svg viewBox="0 0 6 6" className="size-[6px]" fill="currentColor"><path d="M0 0h6L3 6z" /></svg>
        </button>
      </div>
      <div className="mt-[14px] flex h-[27px] items-center gap-[5px]">
        <h1 className="text-[19px] leading-[27px] font-normal text-[#23282d]">Редактировать участок</h1>
        <a href="#" className="flex h-[21px] items-center rounded-[2px] border border-[#cccccc] bg-[#f7f7f7] px-[7px] font-bold text-[#2271b1]">Добавить новый</a>
      </div>
      <div className="mt-[9px] flex items-start gap-4">
        <main className="mt-4 min-w-0 flex-1">
          <Box title="Произвольные поля">
            <div className="px-[9px] pt-[5px] pb-[10px]">
              <FieldsTable>
                <FieldRow name="qqq" value="asfdgasgda" />
                <FieldRow name="Марко" value="Поло" />
              </FieldsTable>
              <h3 className="mt-[8px] mb-[9px] leading-[18px] font-bold">Добавить новое поле:</h3>
              <FieldsTable>
                <tr className="h-[84px] align-top">
                  <td className="pt-[6px] pr-[13px] pl-[6px]">
                    <div className="grid">
                      <select aria-label="Выбрать поле" className={`${field} col-start-1 row-start-1 h-[22px] w-full appearance-none px-1`}>
                        <option>— Выбрать —</option>
                      </select>
                      <svg viewBox="0 0 6 6" className="pointer-events-none z-10 col-start-1 row-start-1 mr-[5px] size-[6px] self-center justify-self-end" fill="#222"><path d="M0 0h6L3 6z" /></svg>
                    </div>
                    <a href="#" className="mt-[6px] block leading-4 text-[#2271b1]">Введите новое</a>
                    <button className={`${smallButton} mt-[6px] h-[22px] px-[9px]`}>Добавить произвольное поле</button>
                  </td>
                  <td className="pt-[6px] pr-6 pl-[6px]">
                    <textarea aria-label="Значение нового поля" className={`${field} h-[35px] w-full resize-y px-[5px] py-[3px]`} />
                  </td>
                </tr>
              </FieldsTable>
              <p className="mt-[9px] leading-[17px]">
                Произвольные поля позволяют добавлять к записям метаданные, которые вы можете <a href="#" className={link}>использовать в своей теме</a>.
              </p>
            </div>
          </Box>
        </main>
        <aside className="flex w-56 shrink-0 flex-col gap-4">
          <Box title="Опубликовать">
            <div className="flex justify-end px-2 pt-2">
              <button className={`${smallButton} h-[22px] px-[9px]`}>Просмотреть изменения</button>
            </div>
            <div className="px-2 pt-[10px] pb-[5px] leading-4 whitespace-nowrap">
              <p className="flex items-center gap-[5px]"><Dash name="pin" className="size-[15px] text-[#82878c]" /><span>Статус: <b>Опубликовано</b> <a href="#" className={link}>Изменить</a></span></p>
              <p className="mt-[11px] flex items-center gap-[5px]"><Dash name="eye" className="size-[15px] text-[#82878c]" /><span>Видимость: <b>Открыто</b> <a href="#" className={link}>Изменить</a></span></p>
              <p className="mt-[11px] flex items-center gap-[5px]"><Dash name="calendar" className="size-[15px] text-[#82878c]" /><span>Опубликовано: <b>21.11.2019 20:14</b></span></p>
              <a href="#" className={`${link} block leading-[15px]`}>Изменить</a>
            </div>
            <div className="flex h-[41px] items-center justify-between border-t border-[#dddddd] bg-[#f5f5f5] px-2">
              <a href="#" className="text-[#aa0000] underline underline-offset-2">Удалить</a>
              <button className="h-[25px] rounded-[2px] border border-[#1a6aa0] bg-[#2281ba] px-[11px] text-[11px] text-white shadow-[0_1px_0_#1a6aa0]">Обновить</button>
            </div>
          </Box>
          <Box title="Изображение записи">
            <p className="h-[47px] px-[9px] pt-[9px] text-[11px] leading-[17px]"><a href="#" className={link}>Установить изображение записи</a></p>
          </Box>
        </aside>
      </div>
      <footer className="mt-auto flex items-center justify-between pb-[8px] leading-[18px]">
        <i className="text-[#555d66]">Спасибо вам за творчество с <a href="#" className={link}>WordPress</a>.</i>
        <a href="#" className={`${link} font-bold`}>Скачать версию 5.3</a>
      </footer>
    </div>
  );
}

function Browser() {
  return (
    <section aria-label="Google Chrome" className="flex min-w-0 bg-[#571c4e] pt-px pl-2">
      <div className="flex min-w-0 flex-1 flex-col rounded-t-[5px] border-b-4 border-l-[3px] border-[#4d4b44]">
        <BrowserTabs />
        <AddressBar />
        <div className="flex flex-1 flex-col font-[Roboto,sans-serif]">
          <AdminBar />
          <div className="flex flex-1">
            <AdminMenu />
            <EditPage />
          </div>
        </div>
      </div>
    </section>
  );
}

export default function App() {
  return (
    <div className="flex min-h-screen flex-col font-['Noto_Sans','Open_Sans',sans-serif]">
      <TopPanel />
      <div className="grid flex-1 grid-cols-2">
        <div className="flex min-w-0">
          <Launcher />
          <FileManager />
        </div>
        <Browser />
      </div>
    </div>
  );
}
